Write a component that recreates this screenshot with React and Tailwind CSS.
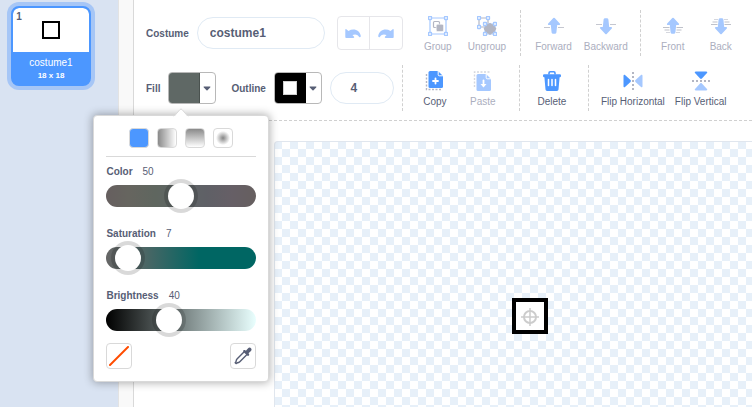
import React from "react";

const LIGHT = "#a5c8ff";
const BLUE = "#4c97ff";
const GREY = "#b3b6c3";

function Icon({ children }) {
  return (
    <svg width="20" height="20" viewBox="0 0 20 20" fill="none" aria-hidden="true">
      {children}
    </svg>
  );
}

function Handles({ points, size = 3 }) {
  return points.map(([x, y]) => (
    <rect key={`${x}-${y}`} x={x} y={y} width={size} height={size} rx=".4" fill="#fff" stroke={LIGHT} strokeWidth="1.3" />
  ));
}

const GroupIcon = () => (
  <Icon>
    <path d="M2 2h16v16H2z" stroke={LIGHT} strokeWidth="1.2" />
    <rect x="5.5" y="5.5" width="6" height="6" rx="1" stroke={GREY} strokeWidth="1.2" />
    <rect x="8.2" y="8.2" width="7.4" height="7.4" rx="1.5" fill={GREY} stroke="#fff" strokeWidth=".6" />
    <Handles points={[[0.5, 0.5], [16.5, 0.5], [0.5, 16.5], [16.5, 16.5]]} />
  </Icon>
);

const UngroupIcon = () => (
  <Icon>
    <path d="M2 2h9v9H2z" stroke={GREY} strokeWidth="1.2" />
    <Handles points={[[0.5, 0.5], [9.5, 0.5], [0.5, 9.5]]} />
    <path d="M8 8h10v10H8z" stroke={LIGHT} />
    <path d="m13 6.800 2 1.400 2.600-.2.300 2.500 1.500 2.300-1.500 2.200-.3 2.600-2.600-.1-2 1.500-2-1.500-2.600.1-.3-2.600-1.500-2.200 1.500-2.300.3-2.500 2.600.2z" fill={GREY} />
    <Handles points={[[6.5, 6.5], [16.5, 6.5], [6.5, 16.5], [16.5, 16.5]]} />
  </Icon>
);

const ARROW_UP =
  "M9.3 2a1 1 0 0 1 1.4 0l5.100 5.400c.6.700.2 1.600-.7 1.600h-1.900l-.8 7.500a1.500 1.500 0 0 1-1.500 1.300H9.100a1.500 1.500 0 0 1-1.500-1.300L6.800 9H4.900c-.9 0-1.300-.9-.7-1.600z";

const ForwardIcon = () => (
  <Icon>
    <path d="M0 11.500h6M14 11.500h6" stroke="#c5c7d0" strokeWidth="1.200" />
    <path d={ARROW_UP} fill={LIGHT} />
  </Icon>
);

const BackwardIcon = () => (
  <Icon>
    <path d="M0 8.500h6M14 8.500h6" stroke="#c5c7d0" strokeWidth="1.200" />
    <path d={ARROW_UP} fill={LIGHT} transform="rotate(180 10 10)" />
  </Icon>
);

const FrontIcon = () => (
  <Icon>
    <path d="M0 11.500h6.500M13.500 11.500H20M1.500 14h5M13.500 14h5" stroke="#bfc2cb" strokeWidth="1.200" />
    <path d="M3 16.500h4M13 16.500h4" stroke="#d5d7de" strokeWidth="1.200" />
    <path d={ARROW_UP} fill={LIGHT} />
  </Icon>
);

const BackIcon = () => (
  <Icon>
    <path d="M0 8.500h6.500M13.500 8.500H20M1.500 6h5M13.500 6h5" stroke="#bfc2cb" strokeWidth="1.200" />
    <path d="M3 3.500h4M13 3.500h4" stroke="#d5d7de" strokeWidth="1.200" />
    <path d={ARROW_UP} fill={LIGHT} transform="rotate(180 10 10)" />
  </Icon>
);

const SHEET = "M5 0h8l5 5v10.500a1.500 1.500 0 0 1-1.500 1.500H5a1.500 1.500 0 0 1-1.500-1.500V1.500A1.500 1.500 0 0 1 5 0z";
const FOLD = "M13.200 0v3.800a1 1 0 0 0 1 1H18";

const CopyIcon = () => (
  <Icon>
    <path d="M1.500 3v15.500H16" stroke={GREY} strokeDasharray="2 1.500" strokeWidth="1.400" />
    <path d={SHEET} fill={BLUE} />
    <path d={FOLD} stroke="#fff" />
    <path d="M10.500 7.500v5M8 10h5" stroke="#fff" strokeWidth="1.800" strokeLinecap="round" />
  </Icon>
);

const PasteIcon = () => (
  <Icon>
    <path d="M16.500 1H1.500v16" stroke="#d5d7de" strokeDasharray="2 1.500" strokeWidth="1.400" />
    <path d={SHEET} fill={LIGHT} transform="translate(0 3)" />
    <path d={FOLD} stroke="#fff" transform="translate(0 3)" />
    <path d="M10.500 9.500v3" stroke="#fff" strokeWidth="1.800" strokeLinecap="round" />
    <path d="M7.500 13h6l-3 3.500z" fill="#fff" />
  </Icon>
);

const DeleteIcon = () => (
  <Icon>
    <path d="M7 3.500V2a1.200 1.200 0 0 1 1.200-1.200h3.600A1.200 1.200 0 0 1 13 2v1.500" stroke={BLUE} strokeWidth="1.600" />
    <rect x="1" y="3.200" width="18" height="3" rx="1.200" fill={BLUE} />
    <path d="M2.300 5h15.400l-1.200 13.500a1.600 1.600 0 0 1-1.600 1.500H5.100a1.600 1.600 0 0 1-1.600-1.500z" fill={BLUE} />
    <path d="M6.500 8.500v6M10 8.500v6M13.500 8.500v6" stroke="#fff" strokeWidth="1.500" strokeLinecap="round" />
  </Icon>
);

const FlipHorizontalIcon = () => (
  <Icon>
    <path d="M10 1v18" stroke={GREY} strokeWidth="2" strokeDasharray="2 2" />
    <path d="M.500 4.800c0-1 .8-1.400 1.500-.8l5.500 5.100c.6.600.6 1.200 0 1.800L2 16c-.7.600-1.500.2-1.500-.8z" fill={BLUE} />
    <path d="M19.500 4.800c0-1-.8-1.400-1.500-.8l-5.500 5.100c-.6.600-.6 1.200 0 1.800L18 16c.7.600 1.500.2 1.500-.8z" fill={LIGHT} />
  </Icon>
);

const FlipVerticalIcon = () => (
  <Icon>
    <path d="M1 10h18" stroke={GREY} strokeWidth="2" strokeDasharray="2 2" />
    <path d="M4.800.500c-1 0-1.400.8-.8 1.500l5.100 5.500c.6.600 1.200.6 1.800 0L16 2c.6-.7.2-1.500-.8-1.500z" fill={BLUE} />
    <path d="M4.800 19.500c-1 0-1.400-.8-.8-1.500l5.100-5.500c.6-.6 1.200-.6 1.800 0L16 18c.6.700.2 1.500-.8 1.500z" fill={LIGHT} />
  </Icon>
);

const UNDO =
  "M3.300 6.200c-.5-.4-1-.1-1 .5v7.400c0 .5.300.9.800.9h7.200c.9 0 1.200-.8.600-1.400l-1.500-1.500c2.500-1.200 5-.8 6.600 1.600.7 1 1.900.6 1.800-.6C17.200 7.600 11 4.500 5.500 7.900z";

function Tool({ label, icon, disabled }) {
  return (
    <button
      type="button"
      disabled={disabled}
      className={`flex min-w-9 flex-col items-center gap-1 pt-1 whitespace-nowrap ${disabled ? "text-[#abaebe]" : "text-[#575e75]"}`}
    >
      {icon}
      <span className="leading-[14px]">{label}</span>
    </button>
  );
}

function Divider() {
  return <div className="h-[46px] border-l border-dashed border-[#d0d0d0]" />;
}

function Caret() {
  return (
    <span className="flex w-4 items-center justify-center">
      <svg width="8" height="5" viewBox="0 0 8 5" aria-hidden="true">
        <path d="M1.200.500h5.600c.6 0 .8.500.4.900L4.500 4.200c-.3.300-.7.300-1 0L.800 1.400C.400 1 .6.500 1.200.500z" fill="#575e75" />
      </svg>
    </span>
  );
}

function Slider({ id, label, value, track }) {
  return (
    <div className="flex flex-col gap-[6px]">
      <div className="flex gap-[10px] leading-[14px]">
        <label htmlFor={id} className="font-bold">{label}</label>
        <output htmlFor={id}>{value}</output>
      </div>
      <input
        id={id}
        type="range"
        min="0"
        max="100"
        defaultValue={value}
        className={`block h-[22px] w-full appearance-none rounded-full ${track} [&::-webkit-slider-runnable-track]:h-[22px] [&::-webkit-slider-thumb]:mt-[-2px] [&::-webkit-slider-thumb]:size-[26px] [&::-webkit-slider-thumb]:appearance-none [&::-webkit-slider-thumb]:rounded-full [&::-webkit-slider-thumb]:bg-white [&::-webkit-slider-thumb]:shadow-[0_0_0_4px_rgba(0,0,0,0.15)]`}
      />
    </div>
  );
}

function ColorPopover() {
  const mode = "size-5 rounded border border-[#d9d9d9]";
  const square = "flex size-[26px] items-center justify-center rounded border border-[#d9d9d9]";
  return (
    <div className="absolute top-[43px] left-[-75px] z-10 w-[176px] rounded border border-[#d9d9d9] bg-white p-3 shadow-[0_0_8px_1px_rgba(0,0,0,0.3)]">
      <svg className="absolute top-[-8px] left-[79px]" width="16" height="9" viewBox="0 0 16 9" aria-hidden="true">
        <path d="M1 8.500 7 1.500q1-1 2 0l6 7" fill="#fff" stroke="#d9d9d9" />
        <path d="M1 8.500h14" stroke="#fff" />
      </svg>
      <div className="flex justify-center gap-2 border-b border-[#d9d9d9] pb-2">
        <button type="button" aria-label="Solid" className={`${mode} bg-[#4c97ff]`} />
        <button type="button" aria-label="Horizontal gradient" className={`${mode} bg-[linear-gradient(90deg,#8a8a8a,#fff)]`} />
        <button type="button" aria-label="Vertical gradient" className={`${mode} bg-[linear-gradient(180deg,#8a8a8a,#fff)]`} />
        <button type="button" aria-label="Radial gradient" className={`${mode} bg-[radial-gradient(circle,#858585_0px,#fff_7px)]`} />
      </div>
      <div className="flex flex-col gap-5 pt-2">
        <Slider
          id="color"
          label="Color"
          value={50}
          track="bg-[linear-gradient(90deg,#665f5f,#66655f_15%,#5f665f_33%,#5f6666_50%,#5f6066_67%,#665f66_84%,#665f5f)]"
        />
        <Slider
          id="saturation"
          label="Saturation"
          value={7}
          track="bg-[linear-gradient(90deg,#666_0%,#4e6665_25%,#006663_62%,#006663_100%)]"
        />
        <Slider
          id="brightness"
          label="Brightness"
          value={40}
          track="bg-[linear-gradient(90deg,#000,#e9fffe)]"
        />
      </div>
      <div className="flex justify-between pt-3">
        <button type="button" aria-label="No color" className={square}>
          <svg width="20" height="20" viewBox="0 0 20 20" aria-hidden="true">
            <path d="M1 19 19 1" stroke="#ff4c00" strokeWidth="2" strokeLinecap="round" />
          </svg>
        </button>
        <button type="button" aria-label="Eyedropper" className={square}>
          <svg width="18" height="18" viewBox="0 0 18 18" aria-hidden="true">
            <path d="M10.200 4.800 3 12c-.8.800-.9 1.700-1 2.700l-.8 1 .9.900 1.200-.8c1-.1 1.800-.4 2.500-1.100L13 7.500" fill="#fff" stroke="#575e75" strokeWidth="1.400" strokeLinejoin="round" />
            <path d="M9.500 3.300c.6-.6 1.300-.5 1.800 0l.6.500 2-2.300c1-1.200 2.400-1.100 3.100-.3.800.8.800 2.100-.3 3.100l-2.200 1.900.4.600c.5.600.5 1.200 0 1.700-.5.500-1.200.5-1.700 0L9.500 5c-.5-.5-.5-1.200 0-1.700z" fill="#575e75" />
          </svg>
        </button>
      </div>
    </div>
  );
}

function CostumeList() {
  return (
    <aside className="w-[119px] shrink-0 border-r border-[#e3e3e3] bg-[#d9e3f2] pt-[6px] pl-[11px]">
      <button
        type="button"
        className="flex size-20 flex-col overflow-hidden rounded-lg border-2 border-[#4c97ff] bg-[#4c97ff] text-white shadow-[0_0_0_4px_#a6c6f6]"
      >
        <span className="flex h-11 w-full shrink-0 rounded-t-md bg-white pl-[2px] text-[#575e75]">
          <span className="w-2 pt-1 leading-[10px] font-bold">1</span>
          <span className="flex flex-1 items-center justify-center pr-[10px]">
            <span className="size-[18px] border-2 border-black bg-white" />
          </span>
        </span>
        <span className="w-full pt-1 leading-[14px]">costume1</span>
        <span className="w-full text-[8px] leading-3 font-bold">18 x 18</span>
      </button>
    </aside>
  );
}

export default function App() {
  const swatch = "flex h-8 w-12 overflow-hidden rounded border border-[#b8b8b8] bg-white";
  const section = "flex gap-3 pl-[14px]";
  return (
    <div className="flex min-h-screen overflow-hidden bg-white font-['Liberation_Sans',Arial,sans-serif] text-[10px] text-[#575e75]">
      <CostumeList />
      <div className="w-[15px] shrink-0 border-r border-[#d9d9d9] bg-[#f9f9f9]" />
      <main className="flex min-w-0 flex-1 flex-col">
        <header className="flex flex-col gap-[9px] border-b border-dashed border-[#d0d0d0] pt-[10px] pb-[9px] pl-3">
          <div className="flex items-center">
            <label htmlFor="costume-name" className="mr-2 font-bold">Costume</label>
            <input
              id="costume-name"
              type="text"
              defaultValue="costume1"
              className="h-8 w-32 rounded-full border border-[#e0eaf4] px-3 text-xs font-bold"
            />
            <div className="mx-3 flex h-[34px] rounded border border-[#e6e6ea]">
              <button type="button" aria-label="Undo" disabled className="flex w-8 items-center justify-center border-r border-[#e6e6ea]">
                <Icon><path d={UNDO} fill={LIGHT} /></Icon>
              </button>
              <button type="button" aria-label="Redo" disabled className="flex w-8 items-center justify-center">
                <Icon><path d={UNDO} fill={LIGHT} transform="translate(20 0) scale(-1 1)" /></Icon>
              </button>
            </div>
            <div className="flex gap-3 pr-[14px] pl-[5px]">
              <Tool label="Group" icon={<GroupIcon />} disabled />
              <Tool label="Ungroup" icon={<UngroupIcon />} disabled />
            </div>
            <Divider />
            <div className={`${section} pr-3`}>
              <Tool label="Forward" icon={<ForwardIcon />} disabled />
              <Tool label="Backward" icon={<BackwardIcon />} disabled />
            </div>
            <Divider />
            <div className={section}>
              <Tool label="Front" icon={<FrontIcon />} disabled />
              <Tool label="Back" icon={<BackIcon />} disabled />
            </div>
          </div>
          <div className="flex items-center">
            <div className="mr-[15px] flex items-center gap-2">
              <span className="font-bold">Fill</span>
              <div className="relative">
                <button type="button" aria-label="Fill" className={swatch}>
                  <span className="-m-px h-8 w-8 border border-[#4a524f] bg-[#5f6865]" />
                  <Caret />
                </button>
                <ColorPopover />
              </div>
            </div>
            <div className="mr-2 flex items-center gap-2">
              <span className="font-bold">Outline</span>
              <button type="button" aria-label="Outline" className={swatch}>
                <span className="-m-px flex h-8 w-8 items-center justify-center bg-black">
                  <span className="size-[14px] border border-[#d0d0d0] bg-white" />
                </span>
                <Caret />
              </button>
            </div>
            <input
              type="number"
              aria-label="Outline width"
              defaultValue="4"
              className="mr-2 h-8 w-16 [appearance:textfield] rounded-full border border-[#e0eaf4] pr-4 text-center text-xs font-bold [&::-webkit-inner-spin-button]:appearance-none"
            />
            <Divider />
            <div className={`${section} pr-[18px]`}>
              <Tool label="Copy" icon={<CopyIcon />} />
              <Tool label="Paste" icon={<PasteIcon />} disabled />
            </div>
            <Divider />
            <div className={`${section} pr-[18px]`}>
              <Tool label="Delete" icon={<DeleteIcon />} />
            </div>
            <Divider />
            <div className="flex gap-[10px] pl-3">
              <Tool label="Flip Horizontal" icon={<FlipHorizontalIcon />} />
              <Tool label="Flip Vertical" icon={<FlipVerticalIcon />} />
            </div>
          </div>
        </header>
        <div className="flex flex-1 pt-5 pl-[140px]">
          <div className="relative flex-1 overflow-hidden rounded-tl border-t border-l border-[#e0e6ee] bg-[conic-gradient(#e7f0f9_25%,#fff_0_50%,#e7f0f9_0_75%,#fff_0)] [background-position:7px_-1px] [background-size:16px_16px]">
            <div className="absolute top-[156px] left-[237px] flex size-9 items-center justify-center border-4 border-black bg-white">
              <svg width="20" height="20" viewBox="0 0 20 20" fill="none" aria-hidden="true">
                <circle cx="10" cy="11" r="6" stroke="#ccc" strokeWidth="2" />
                <path d="M10 2v18M1 11h18" stroke="#ccc" strokeWidth="1.500" />
              </svg>
            </div>
          </div>
        </div>
      </main>
    </div>
  );
}
